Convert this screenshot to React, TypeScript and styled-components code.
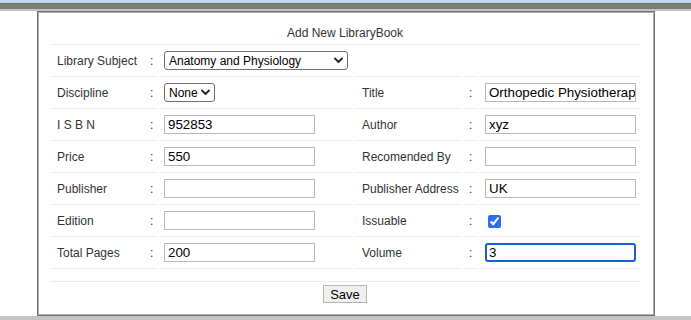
import React from 'react';
import styled, { createGlobalStyle } from 'styled-components';

const GlobalStyle = createGlobalStyle`
  html, body {
    margin: 0;
    padding: 0;
    background: #ffffff;
    font-family: "Liberation Sans", Arial, sans-serif;
  }
`;

const Page = styled.div`
  width: 691px;
  height: 320px;
  display: flex;
  flex-direction: column;
  overflow: hidden;
`;

const TopBar = styled.div`
  height: 11px;
  flex: none;
  background: linear-gradient(
    to bottom,
    #c3d7ee 0 3px,
    #4274bb 3px 4px,
    #7c7c7c 4px 9px,
    #c4c4c4 9px 11px
  );
`;

const Body = styled.div`
  flex: 1;
  display: flex;
  align-items: flex-start;
`;

const Panel = styled.div`
  margin-left: 37px;
  width: 618px;
  height: 305px;
  box-sizing: border-box;
  border: 1px solid #707070;
  box-shadow: inset 1px 1px 0 #b0b0b0, inset -1px -1px 0 #b0b0b0;
  padding: 1px 10px 0 10px;
  background: #fff;
`;

const BottomBar = styled.div`
  height: 4px;
  flex: none;
  background: #c4c4c4;
`;

const FormTable = styled.table`
  width: 594px;
  table-layout: fixed;
  border-collapse: separate;
  border-spacing: 2px 0;
  font-size: 12px;
  color: #333;
`;

const TitleCell = styled.td`
  height: 23px;
  padding: 8px 0 0 0;
  text-align: center;
  border-bottom: 1px solid #ececec;
  color: #333;
`;

const Cell = styled.td<{ $kind?: 'label' | 'colon' | 'field'; $side?: 'left' | 'right' }>`
  height: 31px;
  padding: 0 0 0
    ${(p) =>
      p.$kind === 'label' ? '7px' : p.$kind === 'colon' ? '5px' : p.$side === 'right' ? '6px' : '4px'};
  border-bottom: 1px solid #ececec;
  white-space: nowrap;
  overflow: hidden;
  vertical-align: middle;
`;

const SpacerCell = styled.td`
  height: 12px;
  padding: 0;
  border-bottom: 1px solid #ececec;
`;

const ButtonCell = styled.td`
  padding-top: 3px;
  text-align: center;
`;

const TextInput = styled.input<{ $active?: boolean }>`
  width: 151px;
  height: 19px;
  box-sizing: border-box;
  margin: 0;
  font-family: "Liberation Sans", Arial, sans-serif;
  font-size: 13.33px;
  color: #000;
  border: ${(p) => (p.$active ? '2px solid #1c5fd4' : '1px solid #b8b8b8')};
  border-radius: ${(p) => (p.$active ? '3px' : '0')};
  padding: 0 0 0 ${(p) => (p.$active ? '2px' : '3px')};
  outline: none;
  caret-color: #000;
`;

const SelectWrap = styled.span`
  position: relative;
  display: inline-flex;
  vertical-align: middle;
`;

const Select = styled.select<{ $width: number }>`
  appearance: none;
  width: ${(p) => p.$width}px;
  height: 19px;
  box-sizing: border-box;
  margin: 0;
  padding: 0 14px 0 4px;
  font-family: "Liberation Sans", Arial, sans-serif;
  font-size: 12px;
  color: #000;
  border: 1px solid #6f6f6f;
  border-radius: 3px;
  background: #fff;
`;

const Chevron = styled.svg`
  position: absolute;
  right: 5px;
  top: 6px;
  width: 9px;
  height: 7px;
  pointer-events: none;
`;

const Check = styled.input`
  width: 13px;
  height: 13px;
  margin: 0 0 0 3px;
  accent-color: #2a6ff0;
  vertical-align: middle;
`;

const SaveButton = styled.button`
  height: 18px;
  width: 44px;
  padding: 0;
  font-family: "Liberation Sans", Arial, sans-serif;
  font-size: 13px;
  color: #000;
  background: #efefef;
  border: 1px solid #b5b5b5;
  border-radius: 0;
`;

const Dropdown: React.FC<{ width: number; value: string }> = ({ width, value }) => (
  <SelectWrap>
    <Select $width={width} defaultValue={value}>
      <option>{value}</option>
    </Select>
    <Chevron viewBox="0 0 9 7">
      <path d="M1 1.5 L4.5 5 L8 1.5" fill="none" stroke="#222" strokeWidth="1.8" strokeLinecap="round" strokeLinejoin="round" />
    </Chevron>
  </SelectWrap>
);

type Row = [string, React.ReactNode, string, React.ReactNode];

const App: React.FC = () => {
  const rows: Row[] = [
    ['Discipline', <Dropdown width={51} value="None" />, 'Title', <TextInput defaultValue="Orthopedic Physiotherapy" />],
    ['I S B N', <TextInput defaultValue="952853" />, 'Author', <TextInput defaultValue="xyz" />],
    ['Price', <TextInput defaultValue="550" />, 'Recomended By', <TextInput defaultValue="" />],
    ['Publisher', <TextInput defaultValue="" />, 'Publisher Address', <TextInput defaultValue="UK" />],
    ['Edition', <TextInput defaultValue="" />, 'Issuable', <Check type="checkbox" defaultChecked />],
    ['Total Pages', <TextInput defaultValue="200" />, 'Volume', <TextInput $active autoFocus defaultValue="3" />],
  ];

  return (
    <Page>
      <GlobalStyle />
      <TopBar />
      <Body>
        <Panel>
          <FormTable>
            <colgroup>
              <col style={{ width: 93 }} />
              <col style={{ width: 13 }} />
              <col style={{ width: 193 }} />
              <col style={{ width: 107 }} />
              <col style={{ width: 13 }} />
              <col style={{ width: 161 }} />
            </colgroup>
            <tbody>
              <tr>
                <TitleCell colSpan={6}>Add New LibraryBook</TitleCell>
              </tr>
              <tr>
                <Cell $kind="label">Library Subject</Cell>
                <Cell $kind="colon">:</Cell>
                <Cell $kind="field">
                  <Dropdown width={184} value="Anatomy and Physiology" />
                </Cell>
                <Cell />
                <Cell />
                <Cell />
              </tr>
              {rows.map(([l1, f1, l2, f2]) => (
                <tr key={l1}>
                  <Cell $kind="label">{l1}</Cell>
                  <Cell $kind="colon">:</Cell>
                  <Cell $kind="field">{f1}</Cell>
                  <Cell $kind="label">{l2}</Cell>
                  <Cell $kind="colon">:</Cell>
                  <Cell $kind="field" $side="right">{f2}</Cell>
                </tr>
              ))}
              <tr>
                <SpacerCell colSpan={6} />
              </tr>
              <tr>
                <ButtonCell colSpan={6}>
                  <SaveButton type="button">Save</SaveButton>
                </ButtonCell>
              </tr>
            </tbody>
          </FormTable>
        </Panel>
      </Body>
      <BottomBar />
    </Page>
  );
};

export default App;
